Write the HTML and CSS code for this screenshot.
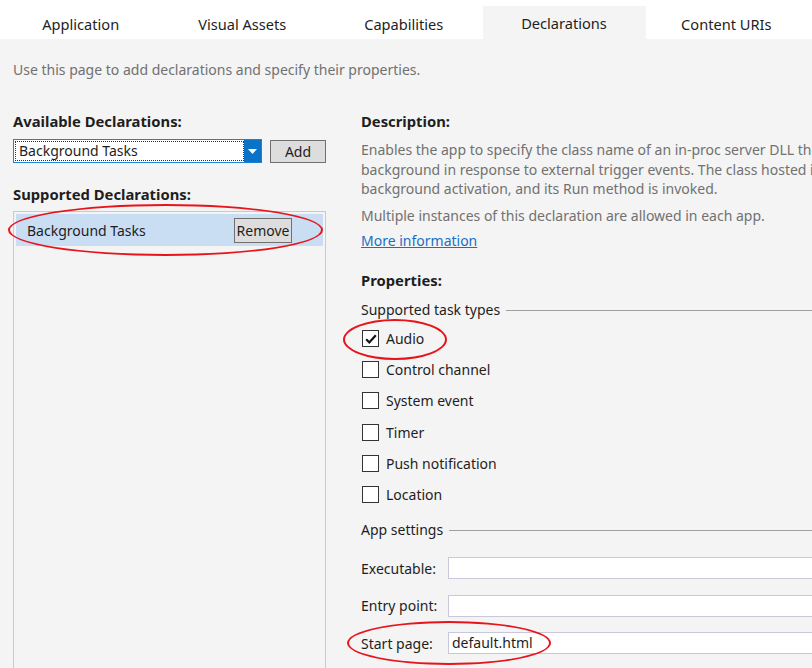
FILE: index.html
```html
<!DOCTYPE html>
<html>
<head>
<meta charset="utf-8">
<link rel="stylesheet" href="styles.css">
</head>
<body>
<div class="page">
  <div class="tabs">
    <div class="tab">Application</div>
    <div class="tab">Visual Assets</div>
    <div class="tab">Capabilities</div>
    <div class="tab active">Declarations</div>
    <div class="tab">Content URIs</div>
  </div>
  <div class="content">
    <p class="intro">Use this page to add declarations and specify their properties.</p>
    <div class="columns">
      <div class="left">
        <h3 class="heading">Available Declarations:</h3>
        <div class="addrow">
          <div class="combo">
            <div class="combo-text"><span class="focus">Background Tasks</span></div>
            <div class="combo-btn"><svg width="9" height="5" viewBox="0 0 9 5"><path d="M0 0H9L4.5 5Z" fill="#fff"/></svg></div>
          </div>
          <button class="btn add">Add</button>
        </div>
        <h3 class="heading supported">Supported Declarations:</h3>
        <div class="listbox">
          <div class="listitem">
            <span>Background Tasks</span>
            <button class="btn remove">Remove</button>
            <div class="ring ring-list"></div>
          </div>
        </div>
      </div>
      <div class="right">
        <h3 class="heading">Description:</h3>
        <p class="desc">Enables the app to specify the class name of an in-proc server DLL that runs app code in the<br>background in response to external trigger events. The class hosted in the DLL is instantiated during<br>background activation, and its Run method is invoked.</p>
        <p class="desc multi">Multiple instances of this declaration are allowed in each app.</p>
        <a class="more" href="#">More information</a>
        <h3 class="heading props">Properties:</h3>
        <div class="group-title"><span>Supported task types</span><div class="rule"></div></div>
        <div class="checks">
          <div class="check"><span class="box checked"><svg width="14" height="14" viewBox="0 0 14 14"><path d="M2.2 7.2L5.3 10.4L11.8 3.2" fill="none" stroke="#111" stroke-width="2.2"/></svg></span><span>Audio</span><div class="ring ring-audio"></div></div>
          <div class="check"><span class="box"></span><span>Control channel</span></div>
          <div class="check"><span class="box"></span><span>System event</span></div>
          <div class="check"><span class="box"></span><span>Timer</span></div>
          <div class="check"><span class="box"></span><span>Push notification</span></div>
          <div class="check"><span class="box"></span><span>Location</span></div>
        </div>
        <div class="group-title app"><span>App settings</span><div class="rule"></div></div>
        <div class="form">
          <div class="field"><label>Executable:</label><div class="input"></div></div>
          <div class="field"><label>Entry point:</label><div class="input"></div></div>
          <div class="field"><label>Start page:</label><div class="input">default.html</div><div class="ring ring-start"></div></div>
        </div>
      </div>
    </div>
  </div>
</div>
</body>
</html>
```
FILE: styles.css
```css
* { box-sizing: border-box; }
html, body { margin: 0; padding: 0; }
body {
  background: #f4f4f4;
  font-family: "Noto Sans", "Open Sans", sans-serif;
  font-size: 14px;
  color: #1e1e1e;
  width: 812px;
  height: 668px;
  overflow: hidden;
}
.page { width: 812px; height: 668px; overflow: hidden; }
.tabs {
  display: flex;
  background: #fff;
  height: 39px;
  align-items: flex-end;
}
.tab {
  width: 161.5px;
  height: 33px;
  text-align: center;
  line-height: 36px;
  font-size: 14.6px;
  color: #1e1e1e;
}
.tab:nth-child(4) { width: 163px; margin-left: -2px; }
.tab.active { background: #f4f4f4; line-height: 34px; }
.content { padding: 0 0 0 13px; }
.intro {
  margin: 21px 0 0;
  line-height: 20px;
  color: #717171;
}
.columns { display: flex; gap: 35px; margin-top: 31px; }
.left { width: 313px; flex: none; }
.right { width: 900px; flex: none; }
.heading {
  margin: 0;
  font-size: 14.8px;
  font-weight: 700;
  line-height: 20px;
  color: #1e1e1e;
}
.addrow { display: flex; gap: 8px; margin-top: 8px; align-items: flex-start; }
.combo {
  width: 249px;
  height: 24px;
  border: 1px solid #1883d7;
  background: #fff;
  display: flex;
}
.combo-text { flex: 1; padding: 1px 0 1px 1px; }
.focus {
  display: block;
  height: 20px;
  border: 1px dotted #333;
  line-height: 18px;
  padding-left: 3px;
  color: #1e1e1e;
}
.combo-btn {
  width: 17px;
  background: #0a73c8;
  display: flex;
  align-items: center;
  justify-content: center;
}
.btn {
  font-family: inherit;
  font-size: 14px;
  color: #1e1e1e;
  background: #dddddd;
  border: 1px solid #707070;
  padding: 0;
}
.add { width: 56px; height: 23px; margin-top: 1px; }
.supported { margin-top: 21px; }
.listbox {
  margin-top: 7px;
  height: 500px;
  border: 1px solid #c9c9d3;
  padding: 2px;
}
.listitem {
  position: relative;
  height: 32px;
  background: #c9ddf3;
  display: flex;
  align-items: center;
  justify-content: space-between;
  padding-left: 11px;
  padding-right: 31px;
}
.remove { width: 58px; height: 25px; }
.ring {
  position: absolute;
  border: 2px solid #e8141b;
  border-radius: 50%;
  pointer-events: none;
}
.ring-list { left: -8px; top: -10px; width: 315px; height: 52px; }
.desc {
  margin: 9px 0 0;
  line-height: 19.5px;
  color: #717171;
  white-space: nowrap;
}
.multi { margin-top: 7px; }
.more {
  display: block;
  margin-top: 6px;
  line-height: 20px;
  color: #1a6fc4;
  text-decoration: underline;
  width: max-content;
}
.props { margin-top: 19px; }
.group-title {
  display: flex;
  align-items: center;
  gap: 6px;
  margin-top: 10px;
  line-height: 20px;
  color: #1e1e1e;
}
.rule { flex: 1; height: 1px; background: #a0a0a0; max-width: 320px; }
.group-title.app .rule { max-width: 365px; }
.checks { margin-top: 3px; }
.check {
  position: relative;
  height: 31.2px;
  display: flex;
  align-items: center;
  gap: 7px;
}
.box {
  width: 17px;
  height: 17px;
  border: 1px solid #333;
  background: #fff;
  display: flex;
  align-items: center;
  justify-content: center;
  margin-left: 1px;
}
.ring-audio { left: -18px; top: -4px; width: 104px; height: 41px; }
.group-title.app { margin-top: 10px; }
.form { margin-top: 17px; }
.field {
  position: relative;
  display: flex;
  align-items: center;
  height: 22px;
  margin-bottom: 15.5px;
}
.field label { width: 87px; flex: none; }
.input {
  width: 400px;
  height: 22px;
  background: #fff;
  border: 1px solid #c8c8dc;
  line-height: 20px;
  padding-left: 3px;
}
.ring-start { left: -14px; top: -11px; width: 204px; height: 44px; }
```
